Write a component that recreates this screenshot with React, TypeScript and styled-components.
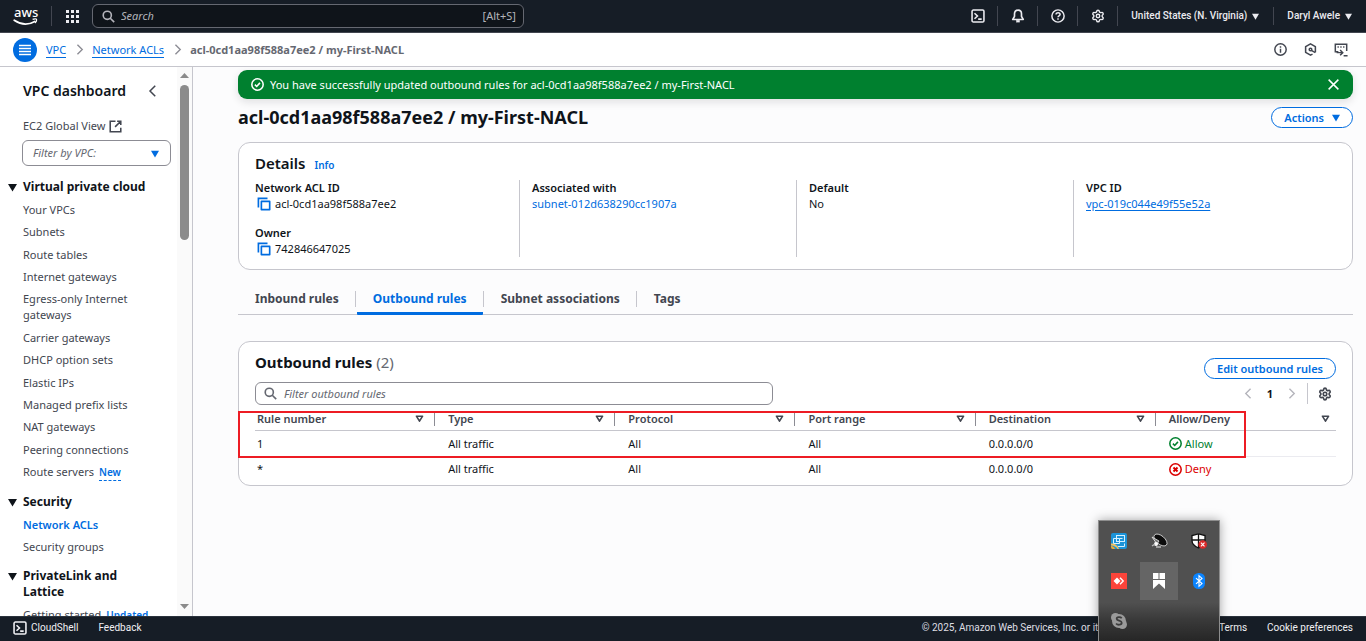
import React from "react";
import styled, { createGlobalStyle, css } from "styled-components";
import { Settings } from "lucide-react";

const blue = "#006ce0";
const ink = "#0f141a";
const slate = "#424650";
const line = "#c6c6cd";

const GlobalStyle = createGlobalStyle`
  * { box-sizing: border-box; }
  html, body, #root { height: 100%; }
  body {
    margin: 0;
    background: #fcfcfd;
    color: ${ink};
    font-family: "Noto Sans", "Open Sans", sans-serif;
    font-size: 11px;
    line-height: 16px;
  }
  button, input, select { font: inherit; color: inherit; }
  button { background: none; border: 0; padding: 0; cursor: pointer; }
  a { color: inherit; text-decoration: none; }
  ul, ol, dl, dd, h1, h2, h3, p { margin: 0; padding: 0; list-style: none; }
`;

const Page = styled.div`
  height: 100vh;
  display: flex;
  flex-direction: column;
  overflow: hidden;
`;

/* ---------- top bar ---------- */

const TopBar = styled.header`
  flex: none;
  height: 33px;
  display: flex;
  align-items: center;
  background: #161d26;
  border-bottom: 1px solid #424650;
  color: #ebebf0;
`;

const Logo = styled.a`
  flex: none;
  width: 52px;
  height: 20px;
  padding-left: 13px;
  border-right: 1px solid #424650;
  svg { display: block; overflow: visible; }
`;

const AppsButton = styled.button`
  flex: none;
  width: 40px;
  display: grid;
  place-items: center;
`;

const GlobalSearch = styled.label`
  flex: 0 1 432px;
  height: 24px;
  display: flex;
  align-items: center;
  gap: 6px;
  padding: 0 7px 0 9px;
  background: ${ink};
  border: 1px solid #656871;
  border-radius: 6px;
  color: #b4b4bb;
  input {
    flex: 1;
    min-width: 0;
    border: 0;
    padding: 0;
    outline: 0;
    background: none;
  }
  input::placeholder { color: #b4b4bb; font-style: italic; opacity: 1; }
`;

const TopTools = styled.nav`
  margin-left: auto;
  display: flex;
  align-items: center;
`;

const ToolButton = styled.button`
  width: 40px;
  height: 20px;
  display: grid;
  place-items: center;
  border-right: 1px solid #424650;
`;

const MenuButton = styled.button<{ $last?: boolean }>`
  height: 18px;
  padding: 0 14px 0 13px;
  display: flex;
  align-items: center;
  gap: 5px;
  font-family: Roboto, "Noto Sans", sans-serif;
  font-size: 10px;
  font-weight: 500;
  white-space: nowrap;
  border-right: ${(p) => (p.$last ? "0" : "1px solid #424650")};
`;

/* ---------- breadcrumb bar ---------- */

const CrumbBar = styled.div`
  flex: none;
  height: 34px;
  display: flex;
  align-items: center;
  padding: 0 18px 0 13px;
  background: #fff;
  border-bottom: 1px solid ${line};
  color: ${slate};
`;

const NavToggle = styled.button`
  width: 24px;
  height: 24px;
  margin-right: 9px;
  border-radius: 50%;
  background: ${blue};
  display: grid;
  place-items: center;
`;

const Crumbs = styled.ol`
  display: flex;
  align-items: center;
  gap: 7px;
  li { display: flex; align-items: center; gap: 8px; }
  a { color: ${blue}; border-bottom: 1px solid ${blue}; line-height: 15px; }
  strong { color: #656871; font-weight: 700; }
`;

const CrumbTools = styled.div`
  margin-left: auto;
  display: flex;
  gap: 17px;
  button { display: grid; place-items: center; }
`;

/* ---------- body ---------- */

const Body = styled.div`
  flex: 1;
  min-height: 0;
  display: flex;
`;

const Sidebar = styled.aside`
  flex: none;
  width: 193px;
  display: flex;
  background: #fff;
  border-right: 1px solid ${line};
`;

const SideScroll = styled.div`
  flex: 1;
  min-width: 0;
  overflow: auto;
  scrollbar-width: none;
  padding: 15px 6px 0 23px;
  color: ${slate};
`;

const ScrollTrack = styled.div`
  width: 15px;
  display: flex;
  flex-direction: column;
  align-items: center;
  justify-content: space-between;
  padding: 6px 0 7px;
  background: #fafafa;
`;

const ScrollTop = styled.div`
  display: flex;
  flex-direction: column;
  align-items: center;
  gap: 7px;
`;

const Thumb = styled.div`
  width: 9px;
  height: 155px;
  border-radius: 5px;
  background: #8b8b8b;
`;

const SideTitle = styled.h2`
  display: flex;
  justify-content: space-between;
  align-items: center;
  padding-right: 12px;
  color: ${ink};
  font-size: 14px;
  line-height: 18px;
  font-weight: 600;
  button { display: grid; }
`;

const GlobalView = styled.a`
  display: flex;
  align-items: center;
  gap: 4px;
  margin-top: 18px;
`;

const VpcFilter = styled.div`
  position: relative;
  margin: 6px 0 0 -1px;
  select {
    appearance: none;
    width: 100%;
    height: 26px;
    padding: 0 10px;
    display: block;
    background: #fff;
    border: 1px solid #8c8c94;
    border-radius: 6px;
    color: #656871;
    font-style: italic;
  }
  svg { position: absolute; right: 12px; top: 10px; pointer-events: none; }
`;

const Group = styled.section`
  margin-top: 13px;
`;

const GroupTitle = styled.h3`
  display: flex;
  gap: 6px;
  margin-left: -15px;
  padding-right: 20px;
  color: ${ink};
  font-size: 12px;
  font-weight: 700;
  svg { flex: none; margin-top: 4px; }
`;

const Links = styled.ul<{ $min?: number }>`
  display: flex;
  flex-direction: column;
  justify-content: space-between;
  gap: 6px;
  margin-top: 7px;
  min-height: ${(p) => (p.$min ? `${p.$min}px` : "auto")};
  li { padding-right: 24px; }
  li:last-child { padding-right: 0; }
`;

const SideLink = styled.a<{ $active?: boolean }>`
  ${(p) => p.$active && css`color: ${blue}; font-weight: 600;`}
`;

const Tag = styled.button`
  margin-left: 5px;
  color: ${blue};
  font-size: 10px;
  line-height: 15px;
  font-weight: 600;
  border-bottom: 1px dashed ${blue};
`;

const Main = styled.main`
  flex: 1;
  min-width: 0;
  overflow: auto;
  scrollbar-width: none;
  padding: 3px 13px 20px 45px;
`;

const Flash = styled.div`
  display: flex;
  align-items: center;
  gap: 6px;
  height: 29px;
  padding: 0 13px;
  border-radius: 9px;
  background: #00802f;
  box-shadow: 0 3px 8px rgba(15, 20, 26, 0.12);
  color: #fff;
  p { flex: 1; }
  button { display: grid; }
`;

const TitleRow = styled.div`
  display: flex;
  justify-content: space-between;
  align-items: center;
  margin-top: 8px;
  h1 { font-size: 18px; line-height: 21px; font-weight: 700; }
`;

const PillButton = styled.button`
  height: 21px;
  padding: 0 12px;
  display: flex;
  align-items: center;
  gap: 8px;
  border: 1px solid ${blue};
  border-radius: 11px;
  background: #fff;
  color: ${blue};
  font-weight: 600;
  white-space: nowrap;
`;

const Card = styled.section`
  background: #fff;
  border: 1px solid ${line};
  border-radius: 12px;
  padding: 10px 16px 12px;
`;

const DetailsCard = styled(Card)`
  margin-top: 14px;
`;

const CardTitle = styled.h2`
  display: flex;
  align-items: baseline;
  gap: 9px;
  font-size: 15px;
  line-height: 20px;
  font-weight: 600;
  a { color: ${blue}; font-size: 10px; }
`;

const DetailGrid = styled.dl`
  display: grid;
  grid-template-columns: repeat(4, 1fr);
  gap: 27px;
  margin-top: 5px;
`;

const DetailColumn = styled.div`
  min-height: 77px;
  display: flex;
  flex-direction: column;
  gap: 13px;
  & + & { margin-left: -13px; padding-left: 12px; border-left: 1px solid ${line}; }
  dt { font-weight: 600; }
  dd { display: flex; align-items: center; gap: 4px; }
`;

const CopyButton = styled.button`
  display: grid;
  margin-left: 2px;
`;

const TextLink = styled.a<{ $underlined?: boolean }>`
  color: ${blue};
  text-decoration: ${(p) => (p.$underlined ? "underline" : "none")};
  text-underline-offset: 2px;
`;

const Tab = styled.button<{ $active?: boolean }>`
  display: flex;
  height: 32px;
  color: ${(p) => (p.$active ? blue : slate)};
  font-size: 12px;
  font-weight: 700;
  white-space: nowrap;
  span {
    padding: 8px 16px 5px;
    border-bottom: 3px solid ${(p) => (p.$active ? blue : "transparent")};
    border-radius: 1px;
  }
`;

const Tabs = styled.div`
  display: flex;
  height: 32px;
  margin-top: 13px;
  padding-left: 1px;
  border-bottom: 1px solid ${line};
  ${Tab} + ${Tab}::before {
    content: "";
    flex: none;
    width: 1px;
    height: 16px;
    margin: 8px 1px 0 0;
    background: ${line};
  }
`;

const RulesCard = styled(Card)`
  margin-top: 26px;
  padding-bottom: 4px;
`;

const RulesHead = styled.div`
  display: flex;
  justify-content: space-between;
  align-items: flex-start;
  h2 { gap: 4px; font-weight: 700; }
  h2 span { color: #656871; font-weight: 400; }
  button { margin-top: 6px; }
`;

const RulesTools = styled.div`
  display: flex;
  justify-content: space-between;
  align-items: center;
  margin-top: 3px;
`;

const RuleFilter = styled.label`
  flex: 0 1 518px;
  height: 23px;
  display: flex;
  align-items: center;
  gap: 7px;
  padding: 0 8px;
  border: 1px solid #8c8c94;
  border-radius: 6px;
  color: #656871;
  input { flex: 1; min-width: 0; border: 0; padding: 0; outline: 0; background: none; }
  input::placeholder { color: #656871; font-style: italic; opacity: 1; }
`;

const Pager = styled.div`
  display: flex;
  align-items: center;
  gap: 13px;
  padding-right: 4px;
  button { display: grid; place-items: center; }
  > strong { font-weight: 700; }
`;

const PagerGear = styled.button`
  height: 21px;
  padding-left: 10px;
  margin-left: -3px;
  border-left: 1px solid ${line};
`;

const TableArea = styled.div`
  position: relative;
  margin-top: 6px;
`;

const RulesTable = styled.table`
  width: 100%;
  table-layout: fixed;
  border-collapse: separate;
  border-spacing: 0;
  th, td { padding: 0 0 0 13px; text-align: left; }
  th:first-child, td:first-child { padding-left: 2px; }
  th { height: 20px; border-bottom: 1px solid ${line}; vertical-align: top; color: ${slate}; font-weight: 600; }
  td { height: 26px; border-bottom: 1px solid #ebebf0; }
  tr:last-child td { height: 24px; border-bottom: 0; }
`;

const HeadCell = styled.div`
  display: flex;
  justify-content: space-between;
  align-items: center;
  height: 15px;
  padding-right: 10px;
  border-right: 1px solid #8c8c94;
  th:last-child & { padding-right: 6px; border-right: 0; }
  button { display: grid; }
`;

const Status = styled.span<{ $tone: string }>`
  display: flex;
  align-items: center;
  gap: 3px;
  color: ${(p) => p.$tone};
`;

const Highlight = styled.div`
  position: absolute;
  left: -17px;
  right: 90px;
  top: 0;
  height: 47px;
  border: 2px solid #ed1c24;
  pointer-events: none;
`;

/* ---------- footer ---------- */

const Footer = styled.footer`
  flex: none;
  height: 25px;
  display: flex;
  align-items: center;
  gap: 20px;
  padding: 0 13px 2px;
  background: #161d26;
  border-top: 1px solid #2b333d;
  color: #f0f0f4;
  font-family: Roboto, "Noto Sans", sans-serif;
  font-size: 10px;
  white-space: nowrap;
  button { display: flex; align-items: center; gap: 4px; }
  small { margin-left: auto; font-size: 10px; color: #dedee3; }
`;

/* ---------- system tray flyout ---------- */

const Tray = styled.div`
  position: fixed;
  right: 146px;
  bottom: 0;
  display: grid;
  grid-template-columns: repeat(3, 40px);
  grid-auto-rows: 40px;
  border: 1px solid #8d8d8d;
  border-bottom: 0;
  background: linear-gradient(#505050 0 68%, #3a3a3a 82%, #262626 100%);
  box-shadow: 0 0 10px rgba(0, 0, 0, 0.35);
`;

const TrayItem = styled.button<{ $hover?: boolean }>`
  margin: 1px;
  display: grid;
  place-items: center;
  background: ${(p) => (p.$hover ? "#656565" : "none")};
`;

/* ---------- icons ---------- */

type IconProps = { size?: number; w?: number; color?: string; children?: React.ReactNode };

const Icon = ({ size = 12, w = 2, color = "currentColor", children }: IconProps) => (
  <svg width={size} height={size} viewBox="0 0 16 16" fill="none" stroke={color} strokeWidth={w} aria-hidden="true">
    {children}
  </svg>
);

const SearchIcon = () => (
  <Icon size={13}><circle cx="6.5" cy="6.5" r="5" /><path d="m10.2 10.2 4.8 4.8" /></Icon>
);
const ShellIcon = () => (
  <Icon size={14} w={1.8}><rect x="1.2" y="1.2" width="13.6" height="13.6" rx="1.5" /><path d="m4 4.8 3.4 3.2L4 11.2M8.2 11.6h4" /></Icon>
);
const Caret = ({ size = 8, color = "currentColor" }: { size?: number; color?: string }) => (
  <svg width={size} height={size} viewBox="0 0 8 8" aria-hidden="true"><path d="M0 .8h8L4 7.6z" fill={color} /></svg>
);
const SortIcon = () => (
  <svg width="9" height="8" viewBox="0 0 9 8" aria-hidden="true"><path d="M1.4 1.2h6.2L4.5 6.2z" fill="none" stroke={slate} strokeWidth="1.6" strokeLinejoin="round" /></svg>
);
const Chevron = ({ left, size = 11, color = "#8c8c94" }: { left?: boolean; size?: number; color?: string }) => (
  <Icon size={size} color={color}><path d={left ? "M11 1 4 8l7 7" : "m5 1 7 7-7 7"} /></Icon>
);
const CopyIcon = () => (
  <Icon size={14} color={blue} w={1.9}><path d="M14.5 5H5v9.5h9.5z" strokeLinejoin="round" /><path d="M1.6 12V1.6H12" /></Icon>
);
const OkIcon = ({ size = 13 }: { size?: number }) => (
  <Icon size={size} w={1.9}><circle cx="8" cy="8" r="7" /><path d="m4.8 8.2 2.2 2.2 4-4.4" /></Icon>
);
const DenyIcon = () => (
  <Icon size={13} w={1.9}><circle cx="8" cy="8" r="7" /><path d="m5.5 5.5 5 5m0-5-5 5" strokeWidth="2.4" /></Icon>
);

const AwsLogo = () => (
  <svg width="26" height="20" viewBox="0 0 26 20" role="img" aria-label="aws">
    <text x="1" y="11" fontSize="13" fontWeight="500" fill="#fff" fontFamily='"Noto Sans", sans-serif'>aws</text>
    <path d="M1.2 14.2c6.8 4.6 14.6 4.6 20.6 1.2" fill="none" stroke="#fff" strokeWidth="1.7" strokeLinecap="round" />
    <path d="M19.6 13.4c2-.9 3.8-.6 4 0s-.4 2.4-1.5 3.6" fill="none" stroke="#fff" strokeWidth="1.2" />
  </svg>
);

/* ---------- data ---------- */

const vpcLinks = [
  "Your VPCs", "Subnets", "Route tables", "Internet gateways", "Egress-only Internet gateways",
  "Carrier gateways", "DHCP option sets", "Elastic IPs", "Managed prefix lists", "NAT gateways",
  "Peering connections",
];

const columns = ["Rule number", "Type", "Protocol", "Port range", "Destination", "Allow/Deny"];

const rules = [
  { n: "1", allow: true },
  { n: "*", allow: false },
];

const GroupHead = ({ children }: { children: React.ReactNode }) => (
  <GroupTitle><Caret size={9} color={ink} />{children}</GroupTitle>
);

export default function App() {
  return (
    <Page>
      <GlobalStyle />
      <TopBar>
        <Logo href="#"><AwsLogo /></Logo>
        <AppsButton aria-label="Services">
          <svg width="13" height="13" viewBox="0 0 13 13" fill="#ebebf0">
            {[0, 5, 10].map((y) => [0, 5, 10].map((x) => <rect key={`${x}-${y}`} x={x} y={y} width="3" height="3" />))}
          </svg>
        </AppsButton>
        <GlobalSearch>
          <SearchIcon />
          <input aria-label="Search" placeholder="Search" />
          <span>[Alt+S]</span>
        </GlobalSearch>
        <TopTools>
          <ToolButton aria-label="CloudShell"><ShellIcon /></ToolButton>
          <ToolButton aria-label="Notifications">
            <Icon size={14} w={1.9}><path d="M8 1.2C5.4 1.2 4 3 4 5.4v3L2 12h12l-2-3.6v-3c0-2.400-1.400-4.200-4-4.200Z" strokeLinejoin="round" /><path d="M6 14h4" strokeWidth="2.6" /></Icon>
          </ToolButton>
          <ToolButton aria-label="Help">
            <Icon size={14} w={1.7}><circle cx="8" cy="8" r="7" /><path d="M5.8 6.4c0-3 4.6-2.7 4.6-.2 0 1.6-2.4 1.7-2.4 3.2M8 10.6v1.8" /></Icon>
          </ToolButton>
          <ToolButton aria-label="Settings"><Settings size={14} strokeWidth={2.4} /></ToolButton>
          <MenuButton>United States (N. Virginia)<Caret size={7} /></MenuButton>
          <MenuButton $last>Daryl Awele<Caret size={7} /></MenuButton>
        </TopTools>
      </TopBar>

      <CrumbBar>
        <NavToggle aria-label="Toggle navigation">
          <svg width="12" height="12" viewBox="0 0 12 12" stroke="#fff" strokeWidth="1.5"><path d="M0 1.5h12M0 4.5h12M0 7.5h12M0 10.5h12" /></svg>
        </NavToggle>
        <nav aria-label="Breadcrumb">
          <Crumbs>
            <li><a href="#">VPC</a><Chevron /></li>
            <li><a href="#">Network ACLs</a><Chevron /></li>
            <li><strong>acl-0cd1aa98f588a7ee2 / my-First-NACL</strong></li>
          </Crumbs>
        </nav>
        <CrumbTools>
          <button aria-label="Info"><Icon size={13} w={1.8}><circle cx="8" cy="8" r="7" /><path d="M8 7v5M8 4v1.8" /></Icon></button>
          <button aria-label="Assistant"><Icon size={13} w={1.9}><path d="M10.5 13.7 8 15l-6-3.500v-7L8 1l6 3.500v7" strokeLinejoin="round" /><circle cx="8" cy="8" r="1.6" /><path d="m9 9 5 2.8" /></Icon></button>
          <button aria-label="Open console"><Icon size={14} w={1.7}><path d="M5 10H1.5V1.5h13V9M4 4.500h1.500M7.200 4.500h1.500M10.400 4.500h1.500M3 11h6.500M7 8l3 3-3 3M11 14.500h4.500" /></Icon></button>
        </CrumbTools>
      </CrumbBar>

      <Body>
        <Sidebar>
          <SideScroll>
            <SideTitle>
              <a href="#">VPC dashboard</a>
              <button aria-label="Collapse"><Chevron left size={12} color={slate} /></button>
            </SideTitle>
            <GlobalView href="#">
              EC2 Global View
              <Icon size={13} w={1.9}><path d="M8 1.5H1.5v13h13V9.5M10 1.5h4.5V6M14.5 1.5 7.5 8.5" /></Icon>
            </GlobalView>
            <VpcFilter>
              <select aria-label="Filter by VPC"><option>Filter by VPC:</option></select>
              <Caret color={blue} />
            </VpcFilter>
            <Group>
              <GroupHead>Virtual private cloud</GroupHead>
              <Links $min={279}>
                {vpcLinks.map((t) => <li key={t}><SideLink href="#">{t}</SideLink></li>)}
                <li><SideLink href="#">Route servers</SideLink><Tag>New</Tag></li>
              </Links>
            </Group>
            <Group>
              <GroupHead>Security</GroupHead>
              <Links>
                <li><SideLink href="#" $active>Network ACLs</SideLink></li>
                <li><SideLink href="#">Security groups</SideLink></li>
              </Links>
            </Group>
            <Group>
              <GroupHead>PrivateLink and Lattice</GroupHead>
              <Links>
                <li><SideLink href="#">Getting started</SideLink><Tag>Updated</Tag></li>
              </Links>
            </Group>
          </SideScroll>
          <ScrollTrack aria-hidden="true">
            <ScrollTop>
              <svg width="9" height="5" viewBox="0 0 9 5"><path d="M0 5 4.5 0 9 5z" fill="#8b8b8b" /></svg>
              <Thumb />
            </ScrollTop>
            <svg width="9" height="5" viewBox="0 0 9 5"><path d="M0 0h9L4.5 5z" fill="#8b8b8b" /></svg>
          </ScrollTrack>
        </Sidebar>

        <Main>
          <Flash role="status">
            <OkIcon />
            <p>You have successfully updated outbound rules for acl-0cd1aa98f588a7ee2 / my-First-NACL</p>
            <button aria-label="Dismiss"><Icon size={13} w={1.8}><path d="m2 2 12 12M14 2 2 14" /></Icon></button>
          </Flash>
          <TitleRow>
            <h1>acl-0cd1aa98f588a7ee2 / my-First-NACL</h1>
            <PillButton>Actions<Caret /></PillButton>
          </TitleRow>

          <DetailsCard>
            <CardTitle>Details <a href="#">Info</a></CardTitle>
            <DetailGrid>
              <DetailColumn>
                <div>
                  <dt>Network ACL ID</dt>
                  <dd><CopyButton aria-label="Copy ACL ID"><CopyIcon /></CopyButton>acl-0cd1aa98f588a7ee2</dd>
                </div>
                <div>
                  <dt>Owner</dt>
                  <dd><CopyButton aria-label="Copy owner"><CopyIcon /></CopyButton>742846647025</dd>
                </div>
              </DetailColumn>
              <DetailColumn>
                <div>
                  <dt>Associated with</dt>
                  <dd><TextLink href="#">subnet-012d638290cc1907a</TextLink></dd>
                </div>
              </DetailColumn>
              <DetailColumn>
                <div>
                  <dt>Default</dt>
                  <dd>No</dd>
                </div>
              </DetailColumn>
              <DetailColumn>
                <div>
                  <dt>VPC ID</dt>
                  <dd><TextLink href="#" $underlined>vpc-019c044e49f55e52a</TextLink></dd>
                </div>
              </DetailColumn>
            </DetailGrid>
          </DetailsCard>

          <Tabs role="tablist">
            {["Inbound rules", "Outbound rules", "Subnet associations", "Tags"].map((t, i) => (
              <Tab key={t} role="tab" aria-selected={i === 1} $active={i === 1}><span>{t}</span></Tab>
            ))}
          </Tabs>

          <RulesCard>
            <RulesHead>
              <CardTitle>Outbound rules <span>(2)</span></CardTitle>
              <PillButton>Edit outbound rules</PillButton>
            </RulesHead>
            <RulesTools>
              <RuleFilter>
                <SearchIcon />
                <input aria-label="Filter outbound rules" placeholder="Filter outbound rules" />
              </RuleFilter>
              <Pager>
                <button aria-label="Previous page"><Chevron left color="#b4b4bb" /></button>
                <strong>1</strong>
                <button aria-label="Next page"><Chevron color="#b4b4bb" /></button>
                <PagerGear aria-label="Preferences"><Settings size={14} strokeWidth={2.8} color={slate} /></PagerGear>
              </Pager>
            </RulesTools>
            <TableArea>
              <RulesTable>
                <thead>
                  <tr>
                    {columns.map((c) => (
                      <th key={c} scope="col">
                        <HeadCell>{c}<button aria-label={`Sort by ${c}`}><SortIcon /></button></HeadCell>
                      </th>
                    ))}
                  </tr>
                </thead>
                <tbody>
                  {rules.map((r) => (
                    <tr key={r.n}>
                      <td>{r.n}</td>
                      <td>All traffic</td>
                      <td>All</td>
                      <td>All</td>
                      <td>0.0.0.0/0</td>
                      <td>
                        <Status $tone={r.allow ? "#00802f" : "#db0000"}>
                          {r.allow ? <OkIcon /> : <DenyIcon />}
                          {r.allow ? "Allow" : "Deny"}
                        </Status>
                      </td>
                    </tr>
                  ))}
                </tbody>
              </RulesTable>
              <Highlight />
            </TableArea>
          </RulesCard>
        </Main>
      </Body>

      <Footer>
        <button><ShellIcon />CloudShell</button>
        <button>Feedback</button>
        <small>© 2025, Amazon Web Services, Inc. or its affiliates.</small>
        <a href="#">Privacy</a>
        <a href="#">Terms</a>
        <a href="#">Cookie preferences</a>
      </Footer>

      <Tray>
        <TrayItem aria-label="Graphics settings">
          <svg width="16" height="16" viewBox="0 0 16 16">
            <rect width="16" height="16" rx="2" fill="#1b93d8" />
            <path d="M0 13c2 .3 3.500 1.200 4 3H2a2 2 0 0 1-2-2z" fill="#f0a92c" />
            <path d="M0 10.500c4 0 7 2 8 5.500H6.500C5.500 14 3 12.500 0 12.500z" fill="#f0c060" />
            <g fill="none" stroke="#d5f0ff" strokeWidth="1"><rect x="5.500" y="2.500" width="8" height="6" /><path d="M2.500 5.500h6v5h-6zM8.500 5.500h3M7 13.500h6.500v-3" /></g>
          </svg>
        </TrayItem>
        <TrayItem aria-label="Satellite">
          <svg width="18" height="16" viewBox="0 0 18 16">
            <ellipse cx="10.500" cy="7" rx="7.800" ry="4.200" transform="rotate(40 10.500 7)" fill="#0c0c0c" stroke="#ddd" strokeWidth=".8" />
            <path d="m9 8-7-4 5 7z" fill="#777" stroke="#ddd" strokeWidth=".9" />
            <circle cx="6" cy="11" r="2" fill="#fff" /><path d="M2 13l3-2M6 14h5" stroke="#bbb" strokeWidth="1.4" />
          </svg>
        </TrayItem>
        <TrayItem aria-label="Security">
          <svg width="16" height="16" viewBox="0 0 16 16">
            <path d="M7.500.8 14 2.500v5c0 3.500-3 6-6.500 7.500C4 13.500 1 11 1 7.500v-5z" fill="#fff" stroke="#111" strokeWidth="1.3" />
            <path d="M7.500 1v14M1 7h13" stroke="#111" strokeWidth="1.3" />
            <circle cx="11.700" cy="11.500" r="4.300" fill="#d92a2a" />
            <path d="m9.900 9.700 3.600 3.600m0-3.600-3.600 3.600" stroke="#fff" strokeWidth="1.1" />
          </svg>
        </TrayItem>
        <TrayItem aria-label="Remote desktop">
          <svg width="16" height="16" viewBox="0 0 16 16">
            <rect width="16" height="16" fill="#fb443a" />
            <path d="M6 4.500 9.500 8 6 11.500 2.500 8z" fill="#fff" />
            <path d="m9 4.800 3.200 3.200L9 11.200" fill="none" stroke="#fff" strokeWidth="1.4" />
          </svg>
        </TrayItem>
        <TrayItem $hover aria-label="Bookmarks">
          <svg width="12" height="16" viewBox="0 0 12 16" fill="#fff"><path d="M0 0h5.500v6H0zM6.500 0H12v6H6.500zM0 7h12v9L6 10.500 0 16z" /></svg>
        </TrayItem>
        <TrayItem aria-label="Bluetooth">
          <svg width="12" height="16" viewBox="0 0 12 16">
            <rect width="12" height="16" rx="5.500" fill="#0a84ff" />
            <path d="m3 5.200 6 5.400-3 2.700V2.700l3 2.700-6 5.400" fill="none" stroke="#fff" strokeWidth="1.1" />
          </svg>
        </TrayItem>
        <TrayItem aria-label="Skype">
          <svg width="16" height="16" viewBox="0 0 16 16">
            <circle cx="8" cy="8" r="7" fill="#9a9a9a" /><circle cx="4.500" cy="4.500" r="4.500" fill="#9a9a9a" /><circle cx="11.500" cy="11.500" r="4.500" fill="#9a9a9a" />
            <path d="M10.700 5.200C9.500 3.700 5.600 3.800 5.700 5.900c.1 2.200 5 1.400 5 3.900 0 2.400-4.200 2.500-5.600.7" fill="none" stroke="#3c3c3c" strokeWidth="1.8" />
          </svg>
        </TrayItem>
      </Tray>
    </Page>
  );
}
